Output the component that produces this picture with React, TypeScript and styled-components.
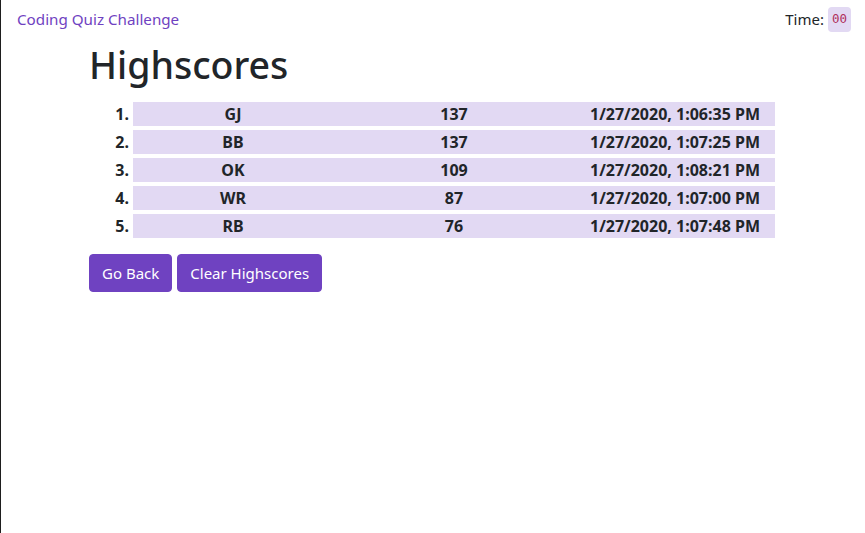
import React from "react";
import styled, { createGlobalStyle } from "styled-components";

const GlobalStyle = createGlobalStyle`
  html, body {
    margin: 0;
    padding: 0;
    background: #ffffff;
  }
  body {
    font-family: "Noto Sans", "Open Sans", sans-serif;
    font-size: 16px;
    line-height: 1.5;
    color: #212529;
  }
`;

const purple = "#6f42c1";
const lightPurple = "#e2d9f3";

const Page = styled.div`
  min-height: 100vh;
  box-sizing: border-box;
  border-left: 1px solid #1e1e1e;
`;

const NavBar = styled.nav`
  display: flex;
  justify-content: space-between;
  align-items: center;
  padding: 6px 14px 0 16px;
  height: 26px;
`;

const Brand = styled.a`
  color: ${purple};
  font-size: 15.2px;
  text-decoration: none;
`;

const Timer = styled.div`
  display: flex;
  align-items: center;
  gap: 4px;
  font-size: 15px;
`;

const TimeBadge = styled.code`
  display: inline-flex;
  align-items: center;
  justify-content: center;
  width: 23px;
  height: 25px;
  border-radius: 4px;
  background: ${lightPurple};
  color: #b0305c;
  font-family: "DejaVu Sans Mono", "Liberation Mono", monospace;
  font-size: 12.5px;
`;

const Container = styled.main`
  padding: 0 90px 0 88px;
`;

const Title = styled.h1`
  margin: 10px 0 15px;
  font-size: 37.5px;
  font-weight: 500;
  line-height: 1.2;
`;

const ScoreList = styled.ol`
  display: flex;
  flex-direction: column;
  gap: 4px;
  margin: 0 0 16px;
  padding: 0;
  list-style: none;
`;

const ScoreRow = styled.li`
  display: grid;
  grid-template-columns: 44px 200px 1fr 200px;
  height: 24px;
  align-items: center;
  font-size: 16px;
  font-weight: 700;
  line-height: 24px;
`;

const Rank = styled.span`
  text-align: right;
  padding-right: 4px;
  align-self: stretch;
`;

const Cell = styled.span<{ $align: "center" | "right" }>`
  text-align: ${(p) => p.$align};
  padding-right: ${(p) => (p.$align === "right" ? "15px" : "0")};
  background: ${lightPurple};
  align-self: stretch;
`;

const ButtonBar = styled.div`
  display: flex;
  gap: 5px;
`;

const Button = styled.button`
  height: 38px;
  padding: 0 12px;
  border: 1px solid ${purple};
  border-radius: 4px;
  background: ${purple};
  color: #ffffff;
  font-family: inherit;
  font-size: 15px;
  cursor: pointer;
`;

const scores = [
  { initials: "GJ", score: 137, date: "1/27/2020, 1:06:35 PM" },
  { initials: "BB", score: 137, date: "1/27/2020, 1:07:25 PM" },
  { initials: "OK", score: 109, date: "1/27/2020, 1:08:21 PM" },
  { initials: "WR", score: 87, date: "1/27/2020, 1:07:00 PM" },
  { initials: "RB", score: 76, date: "1/27/2020, 1:07:48 PM" },
];

const App: React.FC = () => {
  return (
    <>
      <GlobalStyle />
      <Page>
        <NavBar>
          <Brand href="#">Coding Quiz Challenge</Brand>
          <Timer>
            Time: <TimeBadge>00</TimeBadge>
          </Timer>
        </NavBar>
        <Container>
          <Title>Highscores</Title>
          <ScoreList>
            {scores.map((s, i) => (
              <ScoreRow key={s.date}>
                <Rank>{i + 1}.</Rank>
                <Cell $align="center">{s.initials}</Cell>
                <Cell $align="center">{s.score}</Cell>
                <Cell $align="right">{s.date}</Cell>
              </ScoreRow>
            ))}
          </ScoreList>
          <ButtonBar>
            <Button>Go Back</Button>
            <Button>Clear Highscores</Button>
          </ButtonBar>
        </Container>
      </Page>
    </>
  );
};

export default App;
